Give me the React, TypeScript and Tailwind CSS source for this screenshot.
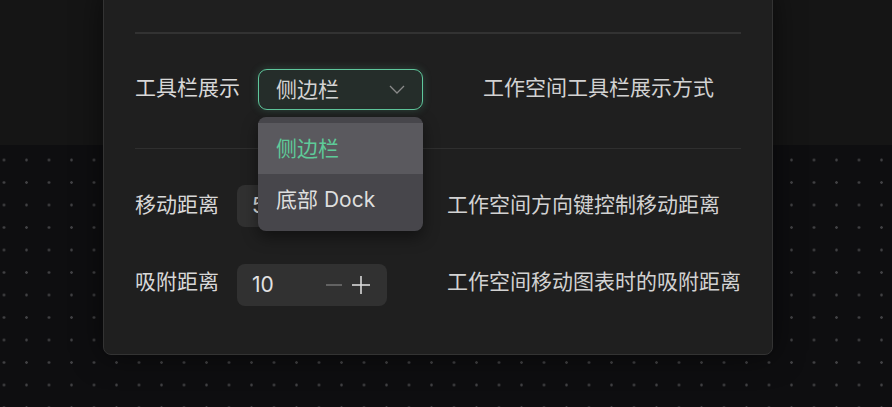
import React from 'react';

const MinusIcon = () => (
  <svg width="18" height="18" viewBox="0 0 18 18">
    <line x1="1" y1="9" x2="17" y2="9" stroke="#6f6f6f" strokeWidth="1.6" />
  </svg>
);

const PlusIcon = () => (
  <svg width="18" height="18" viewBox="0 0 18 18">
    <line x1="0" y1="9" x2="18" y2="9" stroke="#d9d9d9" strokeWidth="1.6" />
    <line x1="9" y1="0" x2="9" y2="18" stroke="#d9d9d9" strokeWidth="1.6" />
  </svg>
);

const Chevron = () => (
  <svg width="16" height="9" viewBox="0 0 16 9" fill="none">
    <polyline points="1,1 8,8 15,1" stroke="#8a8a8a" strokeWidth="1.3" />
  </svg>
);

const NumberBox: React.FC<{ value: string }> = ({ value }) => (
  <div className="flex h-[42px] w-[150px] shrink-0 items-center justify-between rounded-[8px] bg-[#313131] pl-[15px] pr-[17px]">
    <span className="text-[21px] text-[#e2e2e2]">{value}</span>
    <div className="flex items-center gap-[9px]">
      <MinusIcon />
      <PlusIcon />
    </div>
  </div>
);

const options = [
  { label: '侧边栏', active: true },
  { label: '底部 Dock', active: false },
];

export default function App() {
  return (
    <div className="relative h-[407px] w-[892px] overflow-hidden font-['Inter','Noto_Sans_CJK_SC',sans-serif]">
      <div className="h-[145px] bg-[#151515]" />
      <div className="h-[262px] bg-[#0e0e10] bg-[radial-gradient(circle,#404043_1px,transparent_1.6px)] bg-[length:22.5px_22.5px] bg-[position:-7.25px_3.75px]" />

      {/* settings modal */}
      <div className="absolute left-[103px] top-[-10px] h-[365px] w-[670px] rounded-[8px] border border-[#333333] bg-[#1f1f1f] px-[31px] pt-[41px] shadow-[0_0_30px_rgba(0,0,0,0.55)]">
        <div className="h-[2px] bg-[#323232]" />

        <div className="mt-[35px] flex items-center">
          <span className="mb-[3px] text-[21px] text-[#d8d8d8]">工具栏展示</span>
          <div className="relative ml-[18px]">
            <div className="flex h-[41px] w-[165px] items-center justify-between rounded-[9px] border border-[#5fc79c] bg-[#252d2a] pl-[17px] pr-[17px] shadow-[0_0_8px_rgba(95,199,156,0.25)]">
              <span className="text-[21px] text-[#d4d4d4]">侧边栏</span>
              <Chevron />
            </div>
            <div className="absolute left-0 top-[48px] z-10 w-[165px] rounded-[8px] bg-[#47464b] py-[6px] shadow-[0_6px_16px_rgba(0,0,0,0.45)]">
              {options.map((o) => (
                <div
                  key={o.label}
                  className={`flex h-[51px] items-center pl-[18px] text-[21px] ${o.active ? 'bg-[#5a595e] text-[#5ecb99]' : 'text-[#dedede]'}`}
                >
                  {o.label}
                </div>
              ))}
            </div>
          </div>
          <span className="mb-[3px] ml-[60px] text-[21px] text-[#d2d2d2]">工作空间工具栏展示方式</span>
        </div>

        <div className="mt-[38px] h-px bg-[#2f2f2f]" />

        <div className="mt-[36px] flex items-center">
          <span className="mb-[3px] text-[21px] text-[#d8d8d8]">移动距离</span>
          <div className="ml-[18px]">
            <NumberBox value="5" />
          </div>
          <span className="mb-[3px] ml-[60px] text-[21px] text-[#d2d2d2]">工作空间方向键控制移动距离</span>
        </div>

        <div className="mt-[37px] flex items-center">
          <span className="mb-[6px] text-[21px] text-[#d8d8d8]">吸附距离</span>
          <div className="ml-[18px]">
            <NumberBox value="10" />
          </div>
          <span className="mb-[6px] ml-[60px] text-[21px] text-[#d2d2d2]">工作空间移动图表时的吸附距离</span>
        </div>
      </div>
    </div>
  );
}
